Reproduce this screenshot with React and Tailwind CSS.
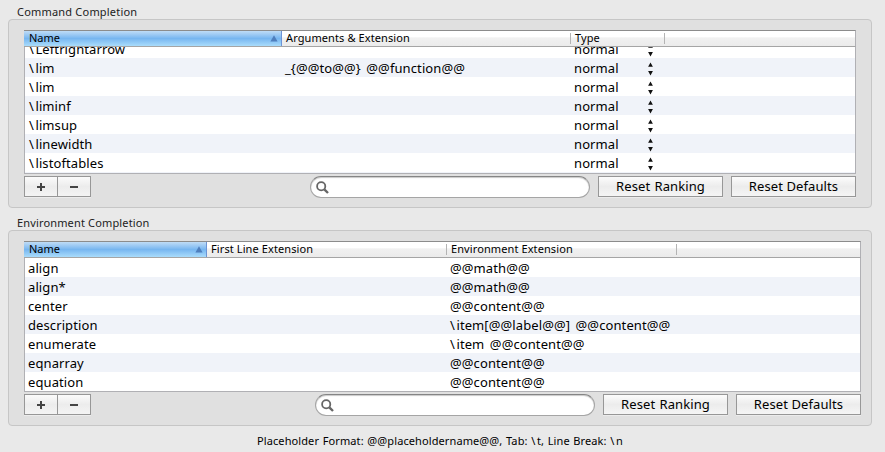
import React from "react";

function SortArrow() {
  return (
    <svg className="mr-[3px] h-[7px] w-[8px] shrink-0" viewBox="0 0 8 7">
      <path d="M4 0.2 7.6 6.6H0.4Z" fill="#4f7fbd" />
    </svg>
  );
}

function Stepper() {
  return (
    <svg className="h-[19px] w-[7px] shrink-0" viewBox="0 0 7 19">
      <path d="M3.5 4.4 5.9 8.8H1.1ZM3.5 17.4 5.9 13H1.1Z" fill="#111" />
    </svg>
  );
}

// Text whose backslashes get a little extra room on their right.
function Code({ children }) {
  return children.split(/(\\)/).map((part, i) =>
    part === "\\" ? (
      <span key={i} className="mr-[1.5px]">
        {part}
      </span>
    ) : (
      part
    )
  );
}

function HeaderCell({ width, label, sorted }) {
  return (
    <div
      className={
        "flex h-[15px] shrink-0 items-center justify-between text-[11px] " +
        width +
        (sorted
          ? " border-r border-[#6d94d6] bg-linear-to-b from-[#bfdcf6] via-[#77b6f0] to-[#a9dcfb] pl-[5px]"
          : " pl-1 tracking-[0.1px]")
      }
    >
      <span className="whitespace-pre pb-[2px] leading-[13px]">{label}</span>
      {sorted ? <SortArrow /> : <i className="h-[11px] w-px bg-[#b4b4b4]" />}
    </div>
  );
}

function Header({ children }) {
  return (
    <div className="flex h-[17px] shrink-0 border border-l-0 border-t-[#8c8c8c] border-r-[#b0b0b4] border-b-[#a5a5a5] bg-linear-to-b from-white from-40% via-[#f1f1f1] via-45% to-[#ebebeb]">
      {children}
    </div>
  );
}

function PushButton({ children }) {
  return (
    <button className="h-[21px] w-[125px] border border-[#979797] bg-linear-to-b from-[#fcfcfc] from-0% via-[#ececec] via-50% to-[#f5f5f5] text-center text-[13px] leading-[19px] tracking-[0.1px] shadow-[0_1px_0_#ececec]">
      {children}
    </button>
  );
}

function Toolbar() {
  return (
    <div className="mt-[2px] flex h-[22px] items-start">
      <div className="flex h-[21px] w-[67px] border border-[#979797] bg-linear-to-b from-[#fbfbfb] via-[#ececec] via-50% to-[#f4f4f4] shadow-[0_1px_0_#ececec]">
        <button className="flex w-[33px] items-center justify-center border-r border-[#979797]">
          <svg className="h-[8px] w-[8px]" viewBox="0 0 8 8">
            <path d="M0 3H3V0H5V3H8V5H5V8H3V5H0Z" fill="#444" />
          </svg>
        </button>
        <button className="flex w-[32px] items-center justify-center">
          <svg className="h-[8px] w-[8px]" viewBox="0 0 8 8">
            <path d="M0 3H8V5H0Z" fill="#444" />
          </svg>
        </button>
      </div>
      <div className="ml-auto flex h-[22px] w-[280px] items-center rounded-full border border-[#a5a5a5] border-t-[#858585] bg-white pl-[5px] shadow-[inset_0_1px_1px_#c9c9c9]">
        <svg className="h-[13px] w-[13px]" viewBox="0 0 13 13" fill="none" stroke="#666">
          <circle cx="5.2" cy="5.2" r="4.1" strokeWidth="1.8" />
          <path d="M8.3 8.3 12 12" strokeWidth="2.4" />
        </svg>
      </div>
      <div className="ml-2 flex gap-2">
        <PushButton>
          <span className="[word-spacing:0.8px]">Reset Ranking</span>
        </PushButton>
        <PushButton>Reset Defaults</PushButton>
      </div>
    </div>
  );
}

const commands = [
  ["\\Leftrightarrow", ""],
  ["\\lim", "_{@@to@@} @@function@@"],
  ["\\lim", ""],
  ["\\liminf", ""],
  ["\\limsup", ""],
  ["\\linewidth", ""],
  ["\\listoftables", ""],
  ["", "", true],
];

const environments = [
  ["align", "@@math@@"],
  ["align*", "@@math@@"],
  ["center", "@@content@@"],
  ["description", "\\item[@@label@@] @@content@@"],
  ["enumerate", "\\item @@content@@"],
  ["eqnarray", "@@content@@"],
  ["equation", "@@content@@"],
];

export default function App() {
  return (
    <div className="h-[452px] w-[885px] overflow-hidden bg-[#e9e9e9] px-2 font-['Noto_Sans','Open_Sans',sans-serif] text-black">
      <h2 className="h-[19px] pl-[9px] pt-[4px] text-[11px] leading-[16px] tracking-[0.2px] text-[#222]">
        Command Completion
      </h2>
      <section className="h-[189px] w-[864px] rounded-[4px] border border-[#c6c6c6] bg-[#e0e0e0] pl-[15px] pt-[10px]">
        <div className="w-[832px]">
          <div className="flex h-[144px] flex-col">
            <Header>
              <HeaderCell width="w-[258px]" label="Name" sorted />
              <HeaderCell width="w-[289px]" label="Arguments & Extension" />
              <HeaderCell width="w-[94px]" label="Type" />
            </Header>
            <div className="h-[127px] overflow-hidden border border-t-0 border-[#b0b0b4] bg-white">
              <div className="-mt-2">
                {commands.map(([name, args, empty], i) => (
                  <div key={i} className="flex h-[19px] text-[13px] leading-[21px] tracking-[0.1px] [word-spacing:2px] odd:bg-white even:bg-[#f0f3f9]">
                    <span className="w-[260px] shrink-0 pl-[4px]"><Code>{name}</Code></span>
                    <span className="w-[289px] shrink-0 whitespace-pre">{args}</span>
                    {!empty && <span className="w-[73px] shrink-0">normal</span>}
                    {!empty && <Stepper />}
                  </div>
                ))}
              </div>
            </div>
          </div>
          <Toolbar />
        </div>
      </section>
      <h2 className="h-[22px] pl-[9px] pt-[7px] text-[11px] leading-[16px] tracking-[0.15px] text-[#222]">
        Environment Completion
      </h2>
      <section className="h-[196px] w-[864px] rounded-[4px] border border-[#c6c6c6] bg-[#e0e0e0] pl-[15px] pt-[10px]">
        <div className="w-[837px]">
          <div className="flex h-[151px] flex-col">
            <Header>
              <HeaderCell width="w-[183px]" label="Name" sorted />
              <HeaderCell width="w-[240px]" label="First Line Extension" />
              <HeaderCell width="w-[230px]" label="Environment Extension" />
            </Header>
            <div className="h-[134px] overflow-hidden border border-t-0 border-[#b0b0b4] bg-white">
              {environments.map(([name, ext], i) => (
                <div key={i} className="flex h-[19px] text-[13px] leading-[21px] tracking-[0.1px] [word-spacing:2px] odd:bg-white even:bg-[#f0f3f9]">
                  <span className="w-[425px] shrink-0 pl-[3px]">{name}</span>
                  <span className="whitespace-pre"><Code>{ext}</Code></span>
                </div>
              ))}
            </div>
          </div>
          <Toolbar />
        </div>
      </section>
      <p className="pl-[249px] pt-[7px] text-[11px] leading-[16px] tracking-[0.1px] [word-spacing:0.7px]">
        <Code>{"Placeholder Format: @@placeholdername@@, Tab: \\t, Line Break: \\n"}</Code>
      </p>
    </div>
  );
}
